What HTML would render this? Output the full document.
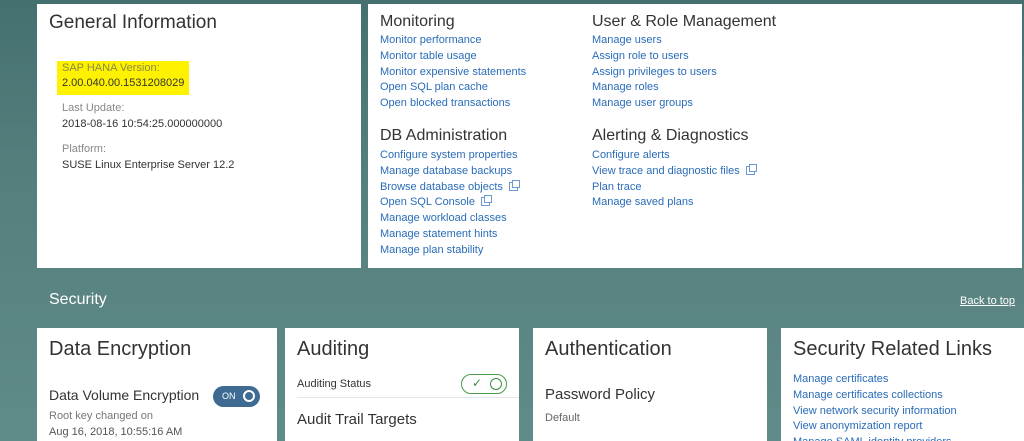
<!DOCTYPE html>
<html style="overflow:hidden"><head><meta charset="utf-8"><style>
*{margin:0;padding:0;box-sizing:border-box}
html,body{width:1024px;height:441px;overflow:hidden}
body{position:relative;font-family:"Liberation Sans",Arial,sans-serif;background:linear-gradient(180deg,#44706f 0%,#557f7d 40%,#5f8b88 100%)}
.p{position:absolute;background:#fff}
.a{position:absolute;white-space:nowrap}
.h{color:#333;font-size:16px}
.l{color:#2a6cb8;font-size:11px;line-height:15.8px}
.g{color:#888;font-size:11px}
.t{color:#333;font-size:11px}
.ct{color:#333;font-size:20px}
.ic{display:inline-block;width:9px;height:9px;border:1px solid #6a9ad0;margin-left:6px;vertical-align:-1px;position:relative}
.ic:after{content:"";position:absolute;left:2px;top:-3px;width:6px;height:6px;border:1px solid #6a9ad0;background:#fff}
</style></head><body>
<div class="p" style="left:37px;top:4px;width:324px;height:264px"></div>
<div class="p" style="left:368px;top:4px;width:654px;height:264px"></div>
<div class="a" style="left:49px;top:12px;font-size:19px;color:#333">General Information</div>
<div class="a" style="left:57px;top:61px;width:132px;height:34px;background:#fff200"></div>
<div class="a g" style="left:62px;top:62px;color:#8a8a4a">SAP HANA Version:</div>
<div class="a t" style="left:62px;top:77px">2.00.040.00.1531208029</div>
<div class="a g" style="left:62px;top:102px">Last Update:</div>
<div class="a t" style="left:62px;top:118px">2018-08-16 10:54:25.000000000</div>
<div class="a g" style="left:62px;top:143px">Platform:</div>
<div class="a t" style="left:62px;top:159px">SUSE Linux Enterprise Server 12.2</div>

<div class="a h" style="left:380px;top:13px">Monitoring</div>
<div class="a l" style="left:380px;top:33px">Monitor performance<br>Monitor table usage<br>Monitor expensive statements<br>Open SQL plan cache<br>Open blocked transactions</div>
<div class="a h" style="left:380px;top:127px">DB Administration</div>
<div class="a l" style="left:380px;top:148px">Configure system properties<br>Manage database backups<br>Browse database objects<span class="ic"></span><br>Open SQL Console<span class="ic"></span><br>Manage workload classes<br>Manage statement hints<br>Manage plan stability</div>
<div class="a h" style="left:592px;top:13px">User &amp; Role Management</div>
<div class="a l" style="left:592px;top:33px">Manage users<br>Assign role to users<br>Assign privileges to users<br>Manage roles<br>Manage user groups</div>
<div class="a h" style="left:592px;top:127px">Alerting &amp; Diagnostics</div>
<div class="a l" style="left:592px;top:148px">Configure alerts<br>View trace and diagnostic files<span class="ic"></span><br>Plan trace<br>Manage saved plans</div>

<div class="a" style="left:49px;top:291px;color:#fff;font-size:16px">Security</div>
<div class="a" style="left:960px;top:295px;color:#fff;font-size:11px;text-decoration:underline">Back to top</div>

<div class="p" style="left:37px;top:328px;width:240px;height:113px"></div>
<div class="p" style="left:285px;top:328px;width:234px;height:113px"></div>
<div class="p" style="left:533px;top:328px;width:234px;height:113px"></div>
<div class="p" style="left:781px;top:328px;width:243px;height:113px"></div>

<div class="a ct" style="left:49px;top:338px">Data Encryption</div>
<div class="a" style="left:49px;top:387px;font-size:14px;color:#333">Data Volume Encryption</div>
<div class="a" style="left:213px;top:386px;width:47px;height:21px;border-radius:11px;background:#3f6b92;color:#fff;font-size:9px;padding:5px 0 0 9px">ON<span style="position:absolute;right:5px;top:4px;width:12px;height:12px;border:2px solid #fff;border-radius:50%"></span></div>
<div class="a g" style="left:49px;top:410px;color:#777">Root key changed on</div>
<div class="a g" style="left:49px;top:426px;color:#555">Aug 16, 2018, 10:55:16 AM</div>

<div class="a ct" style="left:297px;top:338px">Auditing</div>
<div class="a t" style="left:297px;top:378px">Auditing Status</div>
<div class="a" style="left:461px;top:374px;width:46px;height:20px;border:1px solid #4a9a4a;border-radius:10px;color:#3a8a3a;font-size:12px;padding:1px 0 0 10px">✓<span style="position:absolute;right:4px;top:3px;width:12px;height:12px;border:1.5px solid #3a8a3a;border-radius:50%"></span></div>
<div class="a" style="left:297px;top:397px;width:222px;height:1px;background:#e6e6e6"></div>
<div class="a" style="left:297px;top:411px;font-size:15px;color:#333">Audit Trail Targets</div>

<div class="a ct" style="left:545px;top:338px">Authentication</div>
<div class="a" style="left:545px;top:386px;font-size:15px;color:#333">Password Policy</div>
<div class="a g" style="left:545px;top:412px;color:#666">Default</div>

<div class="a ct" style="left:793px;top:338px">Security Related Links</div>
<div class="a l" style="left:793px;top:372px">Manage certificates<br>Manage certificates collections<br>View network security information<br>View anonymization report<br>Manage SAML identity providers</div>
</body></html>
